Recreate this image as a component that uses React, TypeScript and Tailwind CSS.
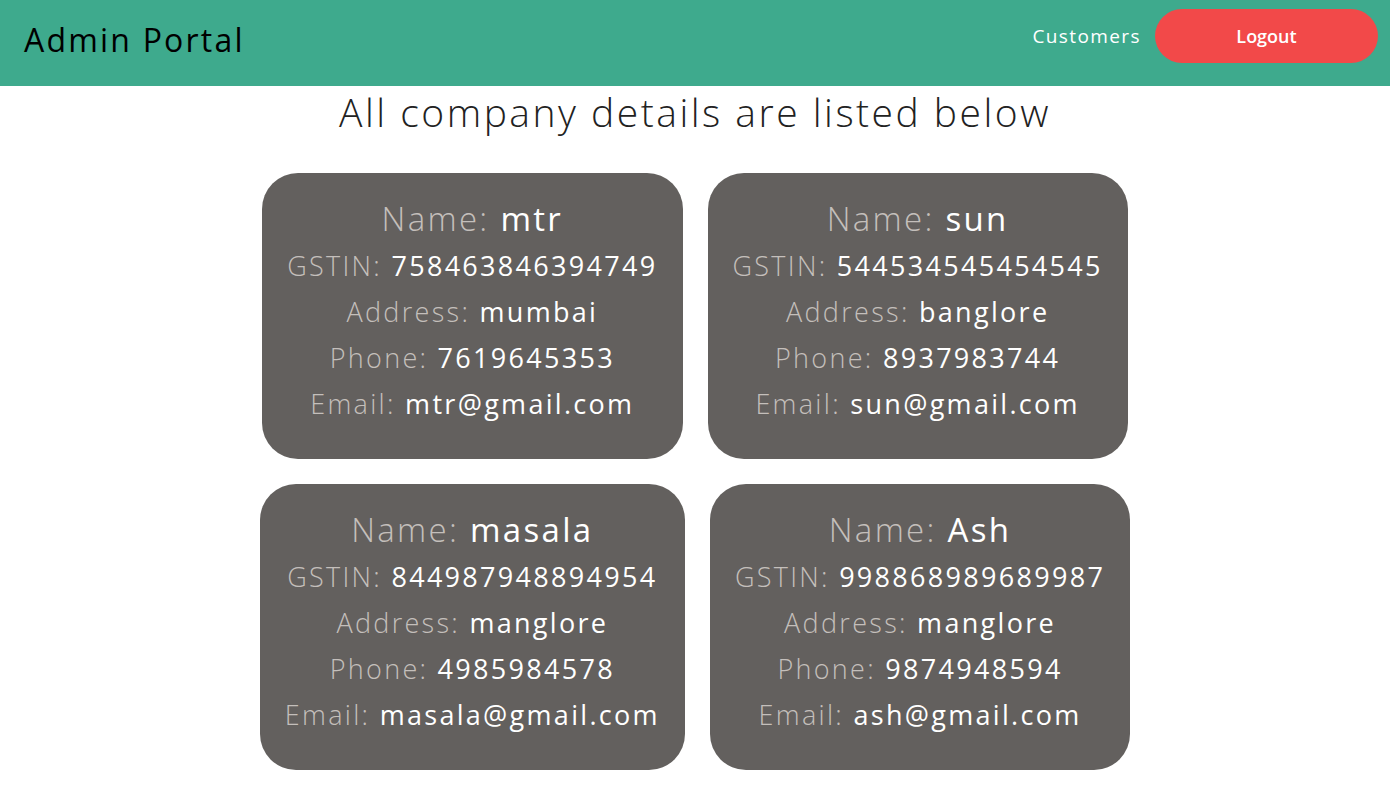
import React from "react";

type Company = {
  name: string;
  gstin: string;
  address: string;
  phone: string;
  email: string;
};

const rows: Company[][] = [
  [
    { name: "mtr", gstin: "758463846394749", address: "mumbai", phone: "7619645353", email: "mtr@gmail.com" },
    { name: "sun", gstin: "544534545454545", address: "banglore", phone: "8937983744", email: "sun@gmail.com" },
  ],
  [
    { name: "masala", gstin: "844987948894954", address: "manglore", phone: "4985984578", email: "masala@gmail.com" },
    { name: "Ash", gstin: "998868989689987", address: "manglore", phone: "9874948594", email: "ash@gmail.com" },
  ],
];

function Line({ label, value, big }: { label: string; value: string; big?: boolean }) {
  return (
    <div
      className={
        big
          ? "text-[33px] leading-[48px] tracking-[2.3px]"
          : "text-[27px] leading-[46px] tracking-[2.3px]"
      }
    >
      <span className="font-light text-[#c4bfbb]">{label}: </span>
      <span className="text-white">{value}</span>
    </div>
  );
}

function CompanyCard({ c }: { c: Company }) {
  return (
    <div className="rounded-[36px] bg-[#63605e] px-[25px] pt-[22px] pb-[32px] text-center whitespace-nowrap">
      <Line label="Name" value={c.name} big />
      <Line label="GSTIN" value={c.gstin} />
      <Line label="Address" value={c.address} />
      <Line label="Phone" value={c.phone} />
      <Line label="Email" value={c.email} />
    </div>
  );
}

export default function App() {
  return (
    <div className="min-h-screen w-full bg-white" style={{ fontFamily: '"Open Sans", "Noto Sans", sans-serif' }}>
      <div className="flex h-[86px] items-start justify-between bg-[#3eaa8d] pl-6 pr-3">
        <div className="pt-[18px] text-[32px] leading-[44px] tracking-[2.2px] text-black">Admin Portal</div>
        <div className="flex items-center gap-[14px] pt-[9px]">
          <button className="text-[19px] tracking-[1.4px] text-white">Customers</button>
          <button className="h-[54px] w-[223px] rounded-[27px] bg-[#f24949] text-[18px] font-semibold text-white">
            Logout
          </button>
        </div>
      </div>

      <div className="text-center text-[39px] font-light leading-[52px] tracking-[2.5px] text-[#222]">
        All company details are listed below
      </div>

      <div className="mt-[35px] flex flex-col items-center gap-[25px]">
        {rows.map((r, i) => (
          <div key={i} className="flex justify-center gap-[25px]">
            {r.map((c) => (
              <CompanyCard key={c.name} c={c} />
            ))}
          </div>
        ))}
      </div>
    </div>
  );
}
